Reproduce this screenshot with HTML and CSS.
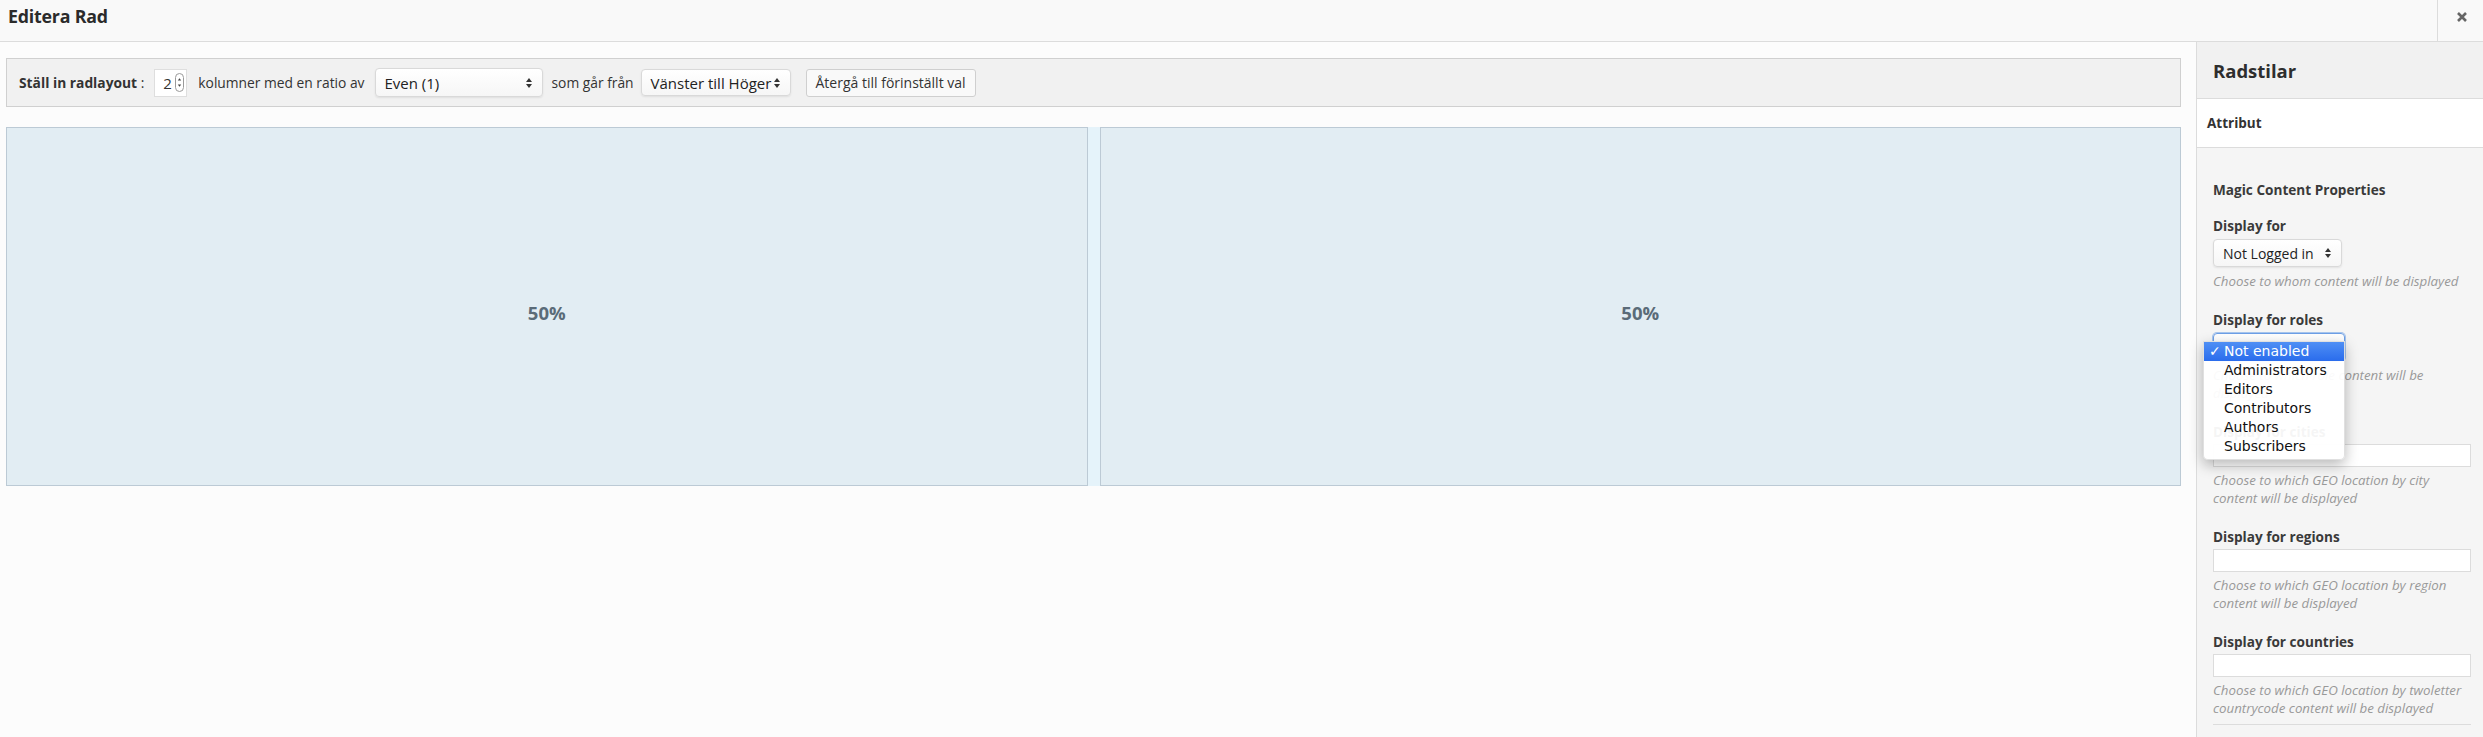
FILE: index.html
```html
<!DOCTYPE html>
<html lang="sv">
<head>
<meta charset="utf-8">
<title>Editera Rad</title>
<link rel="stylesheet" href="styles.css">
</head>
<body>
<div class="app">
  <header class="topbar">
    <h1 class="title">Editera Rad</h1>
    <div class="close" aria-label="Stäng">
      <svg width="12" height="12" viewBox="0 0 12 12"><path d="M2 2 L10 10 M10 2 L2 10" stroke="#666" stroke-width="2.6" stroke-linecap="butt"/></svg>
    </div>
  </header>
  <div class="content">
    <main class="main">
      <div class="toolbar">
        <span class="tb-label"><b>Ställ in radlayout</b> :</span>
        <span class="num">
          <span class="num-val">2</span>
          <span class="spin"><svg width="9" height="19" viewBox="0 0 9 19"><rect x="0.5" y="0.5" width="8" height="18" rx="4" fill="#fff" stroke="#9a9a9a"/><path d="M2.8 7.5 L4.5 5.3 L6.2 7.5 Z M2.8 11.5 L4.5 13.7 L6.2 11.5 Z" fill="#444"/></svg></span>
        </span>
        <span class="tb-text t-cols">kolumner med en ratio av</span>
        <span class="select sel-ratio"><span class="sel-txt">Even (1)</span><svg class="arr" width="8" height="12" viewBox="0 0 8 12"><path d="M1 5 L4 1 L7 5 Z M1 7 L4 11 L7 7 Z" fill="#333"/></svg></span>
        <span class="tb-text t-from">som går från</span>
        <span class="select sel-dir"><span class="sel-txt">Vänster till Höger</span><svg class="arr" width="8" height="12" viewBox="0 0 8 12"><path d="M1 5 L4 1 L7 5 Z M1 7 L4 11 L7 7 Z" fill="#333"/></svg></span>
        <span class="btn">Återgå till förinställt val</span>
      </div>
      <div class="row">
        <div class="cell">50%</div>
        <div class="cell">50%</div>
      </div>
    </main>
    <aside class="side">
      <div class="side-head">Radstilar</div>
      <div class="side-tab">Attribut</div>
      <div class="side-body">
        <h4 class="group-title">Magic Content Properties</h4>
        <div class="field">
          <div class="label label-sel">Display for</div>
          <span class="select sel-side"><span class="sel-txt">Not Logged in</span><svg class="arr" width="8" height="12" viewBox="0 0 8 12"><path d="M1 5 L4 1 L7 5 Z M1 7 L4 11 L7 7 Z" fill="#333"/></svg></span>
          <div class="help help-sel">Choose to whom content will be displayed</div>
        </div>
        <div class="field field-roles">
          <div class="label label-sel">Display for roles</div>
          <span class="select sel-side sel-focus"><span class="sel-txt">Not enabled</span></span>
          <div class="help help-sel">Choose to which role content will be displayed</div>
          <ul class="popup">
            <li class="opt opt-on"><span class="check">✓</span>Not enabled</li>
            <li class="opt">Administrators</li>
            <li class="opt">Editors</li>
            <li class="opt">Contributors</li>
            <li class="opt">Authors</li>
            <li class="opt">Subscribers</li>
          </ul>
        </div>
        <div class="field">
          <div class="label">Display for cities</div>
          <div class="input"></div>
          <div class="help">Choose to which GEO location by city<br>content will be displayed</div>
        </div>
        <div class="field">
          <div class="label">Display for regions</div>
          <div class="input"></div>
          <div class="help">Choose to which GEO location by region<br>content will be displayed</div>
        </div>
        <div class="field field-last">
          <div class="label">Display for countries</div>
          <div class="input"></div>
          <div class="help">Choose to which GEO location by twoletter<br>countrycode content will be displayed</div>
        </div>
        <hr class="rule">
      </div>
    </aside>
  </div>
</div>
</body>
</html>
```

FILE: styles.css
```css
* { box-sizing: border-box; }
html, body { margin: 0; padding: 0; }
body {
  width: 2483px;
  height: 737px;
  overflow: hidden;
  background: #fcfcfc;
  font-family: "Open Sans", "Liberation Sans", sans-serif;
  color: #333;
}
.app { display: flex; flex-direction: column; height: 737px; }

.topbar {
  height: 42px;
  flex: none;
  display: flex;
  align-items: stretch;
  background: #f9f9f9;
  border-bottom: 1px solid #dcdcdc;
}
.title {
  flex: 1;
  margin: 0;
  padding: 0 0 9px 8px;
  display: flex;
  align-items: center;
  font-size: 17.8px;
  font-weight: 700;
  color: #2b2b2b;
  letter-spacing: -0.2px;
}
.close {
  width: 46px;
  border-left: 1px solid #dcdcdc;
  display: flex;
  align-items: center;
  justify-content: center;
  padding-bottom: 7px;
  padding-left: 2px;
}

.content { flex: 1; display: flex; min-height: 0; }

.main {
  flex: 1;
  padding: 16px 15px 0 6px;
}
.toolbar {
  height: 49px;
  background: #f1f1f1;
  border: 1px solid #d0d0d0;
  display: flex;
  align-items: center;
  padding-left: 12px;
  font-size: 13.8px;
  color: #333;
  white-space: nowrap;
}
.tb-label b { font-weight: 700; }
.num {
  margin-left: 10px;
  width: 33px;
  height: 28px;
  background: #fff;
  border: 1px solid #dedede;
  display: inline-flex;
  align-items: center;
  padding-left: 8px;
}
.num-val { font-size: 15px; width: 12px; }
.spin { display: inline-flex; }
.t-cols { margin-left: 11px; }
.select {
  display: inline-flex;
  align-items: center;
  justify-content: space-between;
  height: 29px;
  padding: 0 9px 0 9px;
  background: linear-gradient(#ffffff, #f6f6f6);
  border: 1px solid #d9d9d9;
  border-radius: 4px;
  box-shadow: 0 1px 2px rgba(0,0,0,0.08);
  font-size: 15px;
  color: #222;
  white-space: nowrap;
}
.sel-ratio { margin-left: 10px; width: 168px; }
.t-from { margin-left: 9px; }
.sel-dir { margin-left: 7px; width: 150px; height: 27px; }
.btn {
  margin-left: 15px;
  width: 170px;
  height: 28px;
  display: inline-flex;
  align-items: center;
  justify-content: center;
  background: #f9f9f9;
  border: 1px solid #cfcfcf;
  border-radius: 3px;
  font-size: 14px;
  color: #333;
}

.row {
  margin-top: 20px;
  display: grid;
  grid-template-columns: 1fr 1fr;
  column-gap: 12px;
  background: #e5f3fa;
}
.cell {
  height: 359px;
  background: #e2edf3;
  border: 1px solid #bccad5;
  display: flex;
  align-items: center;
  justify-content: center;
  padding-top: 11px;
  font-size: 18.5px;
  font-weight: 700;
  color: #5a6b78;
}

.side {
  width: 287px;
  flex: none;
  border-left: 1px solid #dcdcdc;
  display: flex;
  flex-direction: column;
  background: #f5f5f5;
}
.side-head {
  height: 57px;
  background: #f1f1f1;
  border-bottom: 1px solid #dcdcdc;
  display: flex;
  align-items: center;
  padding: 0 0 0 16px;
  font-size: 18.5px;
  font-weight: 700;
  color: #2e2e2e;
}
.side-tab {
  height: 49px;
  background: #fff;
  border-bottom: 1px solid #dcdcdc;
  display: flex;
  align-items: center;
  padding-left: 10px;
  font-size: 13.5px;
  font-weight: 700;
  color: #333;
}
.side-body {
  flex: 1;
  padding: 33px 12px 0 16px;
}
.group-title {
  margin: 0 0 18px 0;
  font-size: 13.6px;
  line-height: 18px;
  font-weight: 700;
  color: #3a3a3a;
}
.field { margin-bottom: 21px; position: relative; }
.field-last { margin-bottom: 0; }
.label {
  font-size: 13.6px;
  line-height: 18px;
  font-weight: 700;
  color: #3a3a3a;
  margin-bottom: 3px;
}
.label-sel { margin-bottom: 4px; }
.sel-side {
  width: 129px;
  height: 28px;
  font-size: 14px;
  padding: 0 9px 0 9px;
}
.sel-focus {
  width: 132px;
  border-color: #6d9fe6;
  box-shadow: 0 0 0 1px rgba(90,150,230,0.5);
}
.help {
  margin-top: 4px;
  font-size: 13.3px;
  line-height: 18px;
  font-style: italic;
  color: #999;
}
.help-sel { margin-top: 5px; }
.input {
  width: 258px;
  height: 23px;
  background: #fff;
  border: 1px solid #dcdcdc;
}
.rule {
  margin: 7px 0 0 0;
  width: 258px;
  border: 0;
  border-top: 1px solid #dcdcdc;
}

.popup {
  position: absolute;
  z-index: 10;
  left: -10px;
  top: 30px;
  width: 142px;
  margin: 0;
  padding: 0 0 3px 0;
  list-style: none;
  background: rgba(255,255,255,0.95);
  border: 1px solid rgba(0,0,0,0.12);
  border-radius: 0 0 5px 5px;
  box-shadow: 0 5px 14px rgba(0,0,0,0.28);
  font-family: "DejaVu Sans", sans-serif;
  font-size: 14px;
  color: #111;
}
.opt {
  height: 19px;
  line-height: 19px;
  padding-left: 20px;
  position: relative;
  white-space: nowrap;
}
.opt-on {
  background: linear-gradient(#4f8ff5, #2a6cec);
  color: #fff;
}
.check {
  position: absolute;
  left: 5px;
  top: 0;
}
```
